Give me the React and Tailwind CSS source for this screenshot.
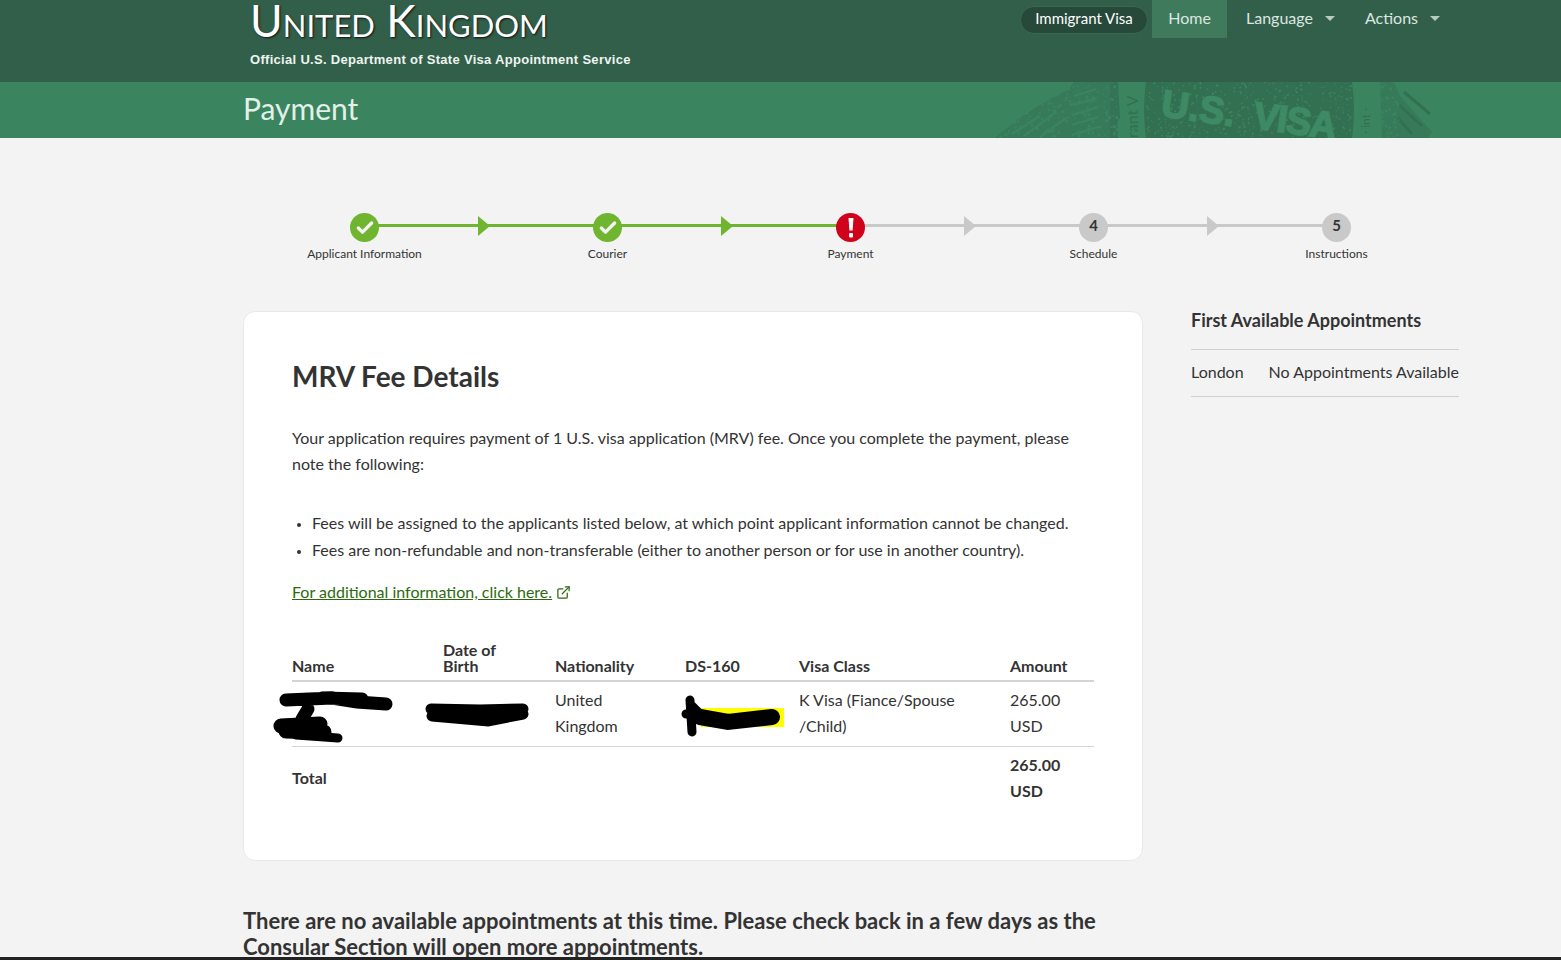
import React from 'react';
import { Check, ExternalLink } from 'lucide-react';

const steps = [
  { label: 'Applicant Information', state: 'done' },
  { label: 'Courier', state: 'done' },
  { label: 'Payment', state: 'error' },
  { label: 'Schedule', state: 'todo', n: 4 },
  { label: 'Instructions', state: 'todo', n: 5 },
];

// speckle for the worn stamp texture
const specks = (x0, x1, count, seed) => {
  const out = [];
  let v = seed;
  for (let i = 0; i < count; i++) {
    v = (v * 9301 + 49297) % 233280;
    const x = x0 + (v / 233280) * (x1 - x0);
    v = (v * 9301 + 49297) % 233280;
    const y = (v / 233280) * 56;
    v = (v * 9301 + 49297) % 233280;
    out.push([x, y, 0.6 + (v / 233280) * 1.1]);
  }
  return out;
};

const Seal = () => (
  <svg className="absolute left-[990px] top-0 pointer-events-none" width="450" height="56" viewBox="0 0 450 56">
    <path d="M156 0 H362 Q366 28 362 56 H156 Q152 28 156 0 Z" fill="#337052" />
    <path d="M5 56 Q36 28 78 8 L84 0 H128 V56 Z" fill="#367a5a" />
    <path d="M128 56 Q122 44 130 36 L128 0 H120 V56 Z" fill="#347356" />
    <path d="M390 0 H404 L410 14 L442 50 L438 56 H392 Z" fill="#367a5a" />
    <g stroke="#3a8560" strokeWidth="2.2" fill="none">
      <path d="M84 14 L106 7 M83 23 L107 16 M82 33 L108 25 M82 43 L108 35 M82 53 L108 45" />
      <path d="M22 52 L50 34 M34 54 L66 30 M50 55 L76 36" />
    </g>
    <g stroke="#337052" strokeWidth="3" fill="none">
      <path d="M414 10 L440 32 M408 22 L432 44 M408 36 L422 52" />
    </g>
    {specks(10, 128, 220, 7).map(([x, y, r], i) => (
      <circle key={i} cx={x} cy={y} r={r} fill="#3a8560" />
    ))}
    {specks(156, 362, 420, 31).map(([x, y, r], i) => (
      <circle key={i} cx={x} cy={y} r={r * 0.7} fill="#3a8560" />
    ))}
    {specks(390, 410, 50, 13).map(([x, y, r], i) => (
      <circle key={i} cx={x} cy={y} r={r} fill="#3a8560" />
    ))}
    <text x="170" y="34" fontFamily="Liberation Sans, sans-serif" fontWeight="700" fontSize="38" fill="#3d8a64" stroke="#3d8a64" strokeWidth="1.5" transform="rotate(8 170 34)">U.S.</text>
    <text x="262" y="46" fontFamily="Liberation Sans, sans-serif" fontWeight="700" fontSize="38" fill="#3d8a64" stroke="#3d8a64" strokeWidth="1.5" textLength="84" transform="rotate(8 262 46)">VISA</text>
    <text x="0" y="0" fontFamily="Lato, sans-serif" fontSize="16" fill="#337052" transform="translate(148 56) rotate(-90)">rant V</text>
    <text x="0" y="0" fontFamily="Lato, sans-serif" fontSize="12" fill="#337052" transform="translate(380 52) rotate(-90)">· int ·</text>
  </svg>
);

const Stepper = () => (
  <div className="grid grid-cols-5 w-[1215px] pt-[75px]">
    {steps.map((s, i) => {
      const green = s.state === 'done';
      return (
        <div key={s.label} className="relative flex flex-col items-center">
          {i < 4 && (
            <div className={`absolute left-1/2 top-[11px] w-full h-[3px] ${green ? 'bg-[#70b52f]' : 'bg-[#c9c9c9]'}`}>
              <div className={`absolute left-[113px] top-[-8.5px] w-0 h-0 border-y-[10px] border-y-transparent border-l-[12px] ${green ? 'border-l-[#70b52f]' : 'border-l-[#c9c9c9]'}`} />
            </div>
          )}
          <div className={`relative w-[29px] h-[29px] rounded-full flex items-center justify-center ${green ? 'bg-[#70b52f]' : s.state === 'error' ? 'bg-[#d0021b]' : 'bg-[#c9c9c9]'}`}>
            {green && <Check size={20} strokeWidth={4} className="text-[#f3f3f3]" />}
            {s.state === 'error' && (
              <svg width="6" height="20" viewBox="0 0 6 20">
                <path d="M0.5 0 H5.5 L4.6 12.5 H1.4 Z" fill="#fff" />
                <rect x="1" y="15" width="4" height="4.5" rx="1" fill="#fff" />
              </svg>
            )}
            {s.n && <span className="text-[#333] font-bold text-[15px] leading-none mt-[-4px]">{s.n}</span>}
          </div>
          <div className="mt-[3px] text-[12px] leading-[17px] text-[#333]">{s.label}</div>
        </div>
      );
    })}
  </div>
);

const Scribble = ({ w, h, d, children }) => (
  <svg className="absolute overflow-visible" width={w} height={h} viewBox={`0 0 ${w} ${h}`} style={d}>
    {children}
  </svg>
);

const App = () => (
  <div className="relative h-screen overflow-hidden bg-[#f3f3f3] text-[#333] font-['Lato',sans-serif] text-[16px]">
    <header className="h-[82px] bg-[#325f4a] flex">
      <div className="ml-[250px] flex-1">
        <h1 className="h-[46px] text-[44.5px] leading-[40px] text-white [font-variant:small-caps] [text-shadow:1px_1px_2px_#111]">United Kingdom</h1>
        <p className="mt-[4px] font-['Liberation_Sans',sans-serif] font-bold text-[13px] leading-[20px] tracking-[0.3px] text-[#eef4f0]">Official U.S. Department of State Visa Appointment Service</p>
      </div>
      <nav className="flex items-start pr-[121px] text-[16px] text-[#dbe7e0]">
        <span className="mt-[6px] mr-[4px] h-[28px] w-[128px] pb-[3px] rounded-full bg-[#26493a] border border-[#3a6652] text-white text-[15px] flex items-center justify-center">Immigrant Visa</span>
        <a className="h-[38px] w-[75px] pb-[2px] bg-[#3f7a5d] flex items-center justify-center">Home</a>
        <a className="ml-[19px] h-[38px] pb-[2px] flex items-center">Language<span className="ml-[12px] w-0 h-0 border-x-[5px] border-x-transparent border-t-[5px] border-t-[#b8cbc0]" /></a>
        <a className="ml-[30px] h-[38px] pb-[2px] flex items-center">Actions<span className="ml-[12px] w-0 h-0 border-x-[5px] border-x-transparent border-t-[5px] border-t-[#b8cbc0]" /></a>
      </nav>
    </header>

    <div className="relative h-[56px] bg-[#3a8560] overflow-hidden">
      <Seal />
      <h2 className="ml-[243px] text-[30px] leading-[53px] text-[#e3f0e8]">Payment</h2>
    </div>

    <main className="ml-[243px] w-[1216px]">
      <Stepper />

      <div className="flex mt-[49px] gap-[48px]">
        <section className="w-[900px] h-[550px] shrink-0 bg-white border border-[#e8e8e8] rounded-xl pl-[48px] pr-[48px] pt-[44px]">
          <h3 className="text-[28px] leading-[40px] font-bold text-[#333]">MRV Fee Details</h3>
          <p className="mt-[29px] leading-[26px] text-[16px]">Your application requires payment of 1 U.S. visa application (MRV) fee. Once you complete the payment, please note the following:</p>
          <ul className="mt-[32px] ml-[20px] list-disc list-outside marker:text-[13px] text-[16px] leading-[27px]">
            <li>Fees will be assigned to the applicants listed below, at which point applicant information cannot be changed.</li>
            <li>Fees are non-refundable and non-transferable (either to another person or for use in another country).</li>
          </ul>
          <p className="mt-[16px] leading-[26px] text-[16px]">
            <a className="text-[#2c6a0f] underline inline-flex items-center">For additional information, click here.</a>
            <ExternalLink size={15} strokeWidth={2} className="inline ml-[4px] mt-[-3px] text-[#2c6a0f]" />
          </p>

          <table className="relative mt-[37px] w-[802px] table-fixed border-collapse text-[16px]">
            <colgroup>
              <col className="w-[151px]" /><col className="w-[112px]" /><col className="w-[130px]" />
              <col className="w-[114px]" /><col className="w-[211px]" /><col className="w-[84px]" />
            </colgroup>
            <thead>
              <tr className="border-b-[2px] border-[#d4d4d4] text-left font-bold leading-[16px] align-bottom">
                <th className="pb-[6px]">Name</th>
                <th className="pb-[6px]">Date of<br />Birth</th>
                <th className="pb-[6px]">Nationality</th>
                <th className="pb-[6px]">DS-160</th>
                <th className="pb-[6px]">Visa Class</th>
                <th className="pb-[6px]">Amount</th>
              </tr>
            </thead>
            <tbody className="leading-[26px] [&_td]:pb-[2px]">
              <tr className="relative border-b border-[#d4d4d4] h-[65px] align-middle">
                <td className="relative">
                  <Scribble w={125} h={50} d={{ left: -20, top: 7 }}>
                    <path d="M14 11 L60 9 L85 13 L114 15 M50 9 L90 10 M36 20 L30 30" stroke="#000" strokeWidth="13" strokeLinecap="round" fill="none" />
                    <path d="M9 37 L48 35 M14 42 L52 43" stroke="#000" strokeWidth="15" strokeLinecap="round" fill="none" />
                    <path d="M24 46 L66 49" stroke="#000" strokeWidth="9" strokeLinecap="round" fill="none" />
                  </Scribble>
                </td>
                <td className="relative">
                  <Scribble w={105} h={30} d={{ left: -17, top: 19 }}>
                    <path d="M5 8 L54 9 L97 8 M6 15 L62 20 L97 13 M20 12 L80 13" stroke="#000" strokeWidth="11" strokeLinecap="round" fill="none" />
                  </Scribble>
                </td>
                <td>United<br />Kingdom</td>
                <td className="relative">
                  <div className="absolute left-[16px] top-[26px] w-[83px] h-[19px] bg-[#ffff00]" />
                  <Scribble w={102} h={45} d={{ left: -3, top: 12 }}>
                    <path d="M8 6 L10 38 M4 20 L16 20 M10 12 L20 22" stroke="#000" strokeWidth="9" strokeLinecap="round" fill="none" />
                    <path d="M18 23 L46 28 L90 23" stroke="#000" strokeWidth="16" strokeLinecap="round" fill="none" />
                  </Scribble>
                </td>
                <td>K Visa (Fiance/Spouse<br />/Child)</td>
                <td>265.00<br />USD</td>
              </tr>
              <tr className="font-bold h-[65px] align-middle">
                <td colSpan={5}>Total</td>
                <td>265.00<br />USD</td>
              </tr>
            </tbody>
          </table>
        </section>

        <aside className="w-[268px] shrink-0">
          <h4 className="text-[18px] leading-[18px] font-bold pb-[20px] border-b border-[#cfcfcf]">First Available Appointments</h4>
          <div className="flex justify-between h-[47px] pb-[2px] items-center border-b border-[#cfcfcf] text-[16px]">
            <span>London</span>
            <span>No Appointments Available</span>
          </div>
        </aside>
      </div>

      <p className="mt-[47px] w-[900px] text-[22px] leading-[26px] font-bold">There are no available appointments at this time. Please check back in a few days as the Consular Section will open more appointments.</p>
    </main>

    <div className="fixed inset-x-0 bottom-0 h-[3px] bg-[#222]" />
  </div>
);

export default App;
